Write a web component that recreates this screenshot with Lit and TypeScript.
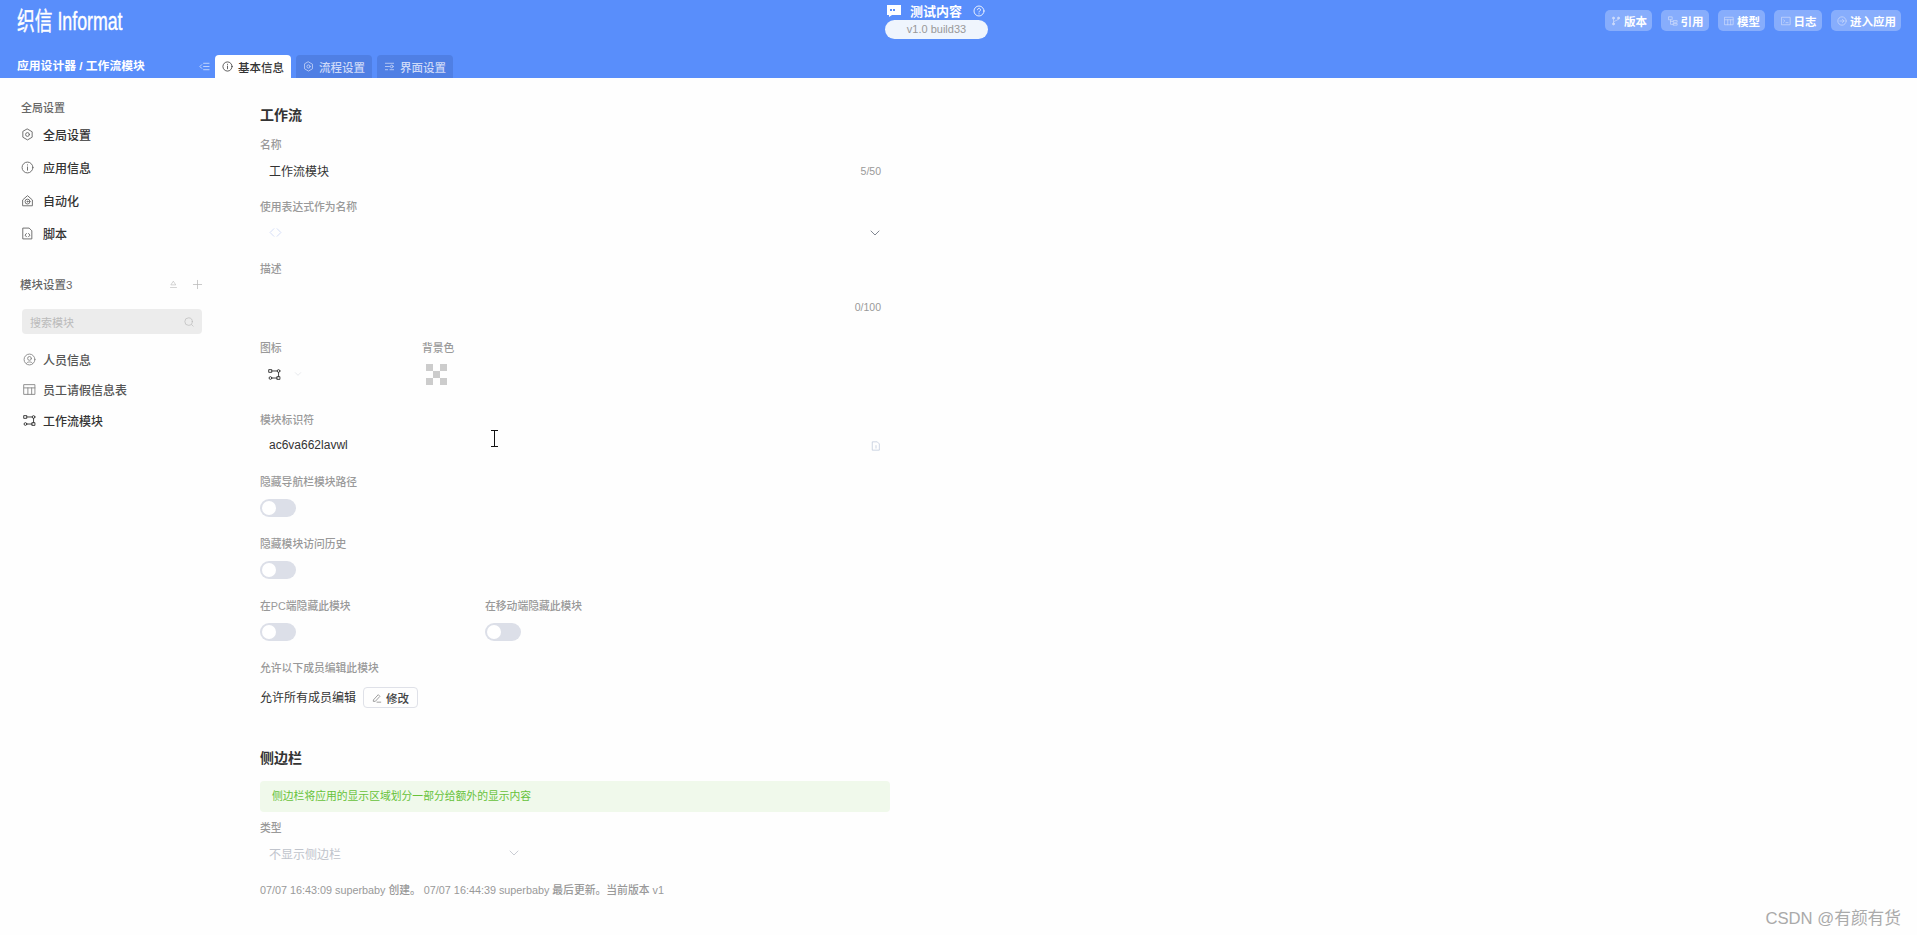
import { LitElement, html, css, svg } from "lit";
import { customElement } from "lit/decorators.js";

const ic = (body: unknown, size = 12, cls = "") =>
  html`<svg class=${cls} width=${size} height=${size} viewBox="0 0 24 24" fill="none" stroke="currentColor" stroke-width="1.700" stroke-linecap="round" stroke-linejoin="round">${body}</svg>`;

const gear = svg`<path d="M12 2l8.600 5v10L12 22l-8.600-5V7z"/><circle cx="12" cy="12" r="3.500"/>`;
const info = svg`<circle cx="12" cy="12" r="10"/><path d="M12 11v6M12 7v.5"/>`;
const auto = svg`<path d="M3 21V11l9-8 9 8v10z"/><circle cx="12" cy="14" r="4.500"/><circle cx="12" cy="14" r="1"/>`;
const script = svg`<path d="M4 2h11l5 5v15H4z"/><path d="M10 12l-2.500 3 2.500 3M14 12l2.500 3-2.500 3"/>`;
const person = svg`<circle cx="12" cy="12" r="10"/><circle cx="12" cy="10" r="3.500"/><path d="M6.500 19c1-3.500 10-3.500 11 0"/>`;
const table = svg`<path d="M2 3h20v18H2zM2 9h20M9 9v12M16 9v12"/>`;
const flow = svg`<rect x="2" y="3" width="5" height="5"/><circle cx="19.500" cy="5.500" r="2.500"/><circle cx="4.500" cy="18.500" r="2.500"/><rect x="17" y="16" width="5" height="5"/><path d="M7 5.500h10M7 18.500h10M19.500 8v8"/>`;
const branch = svg`<circle cx="6" cy="5" r="2.500" fill="currentColor"/><circle cx="18" cy="5" r="2.500" fill="currentColor"/><circle cx="6" cy="19" r="2.500" fill="currentColor"/><path d="M6 7v10M18 7c0 5-12 3-12 8"/>`;
const ref = svg`<rect x="2" y="2" width="8" height="7"/><rect x="13" y="11" width="9" height="4"/><rect x="13" y="18" width="9" height="4"/><path d="M6 9v11h7M6 13h7"/>`;
const term = svg`<rect x="2" y="3" width="20" height="18"/><path d="M6 9l3 3-3 3M12 16h5"/>`;
const enter = svg`<circle cx="12" cy="12" r="10"/><path d="M7 12h10M13 8l4 4-4 4"/>`;
const sliders = svg`<path d="M3 5h18M3 12h9M3 19h5M13 19h8"/><circle cx="17" cy="12" r="3"/>`;
const chevron = svg`<path d="M4 8l8 8 8-8"/>`;

@customElement("app-root")
export class AppRoot extends LitElement {
  static styles = css`
    :host { display: block; height: 935px; overflow: hidden; position: relative; background: #fefefe; color: #333;
      font-family: "Liberation Sans", "Noto Sans CJK SC", sans-serif; font-size: 12px; }
    svg { display: block; flex: none; }
    header { height: 78px; background: #598efb; color: #fff; display: flex; flex-direction: column; }
    .top { height: 55px; display: grid; grid-template-columns: 885px 103px 1fr; }
    .logo { margin: 7px 0 0 17px; font-size: 25px; line-height: 29px; font-weight: 400; transform: scaleX(.71); transform-origin: left; white-space: nowrap; -webkit-text-stroke: .4px #fff; }
    .center { display: flex; flex-direction: column; align-items: stretch; padding-top: 1px; }
    .title { display: flex; align-items: center; height: 19px; font-weight: 700; font-size: 13px; padding-left: 2px; white-space: nowrap; }
    .title .t { margin: 0 11px 0 9px; }
    .pill { width: 103px; height: 19px; border-radius: 10px; background: #eff5fd; color: #999; font-size: 11px; line-height: 19px; text-align: center; }
    .acts { display: flex; justify-content: flex-end; gap: 9px; padding: 10px 16px 0 0; }
    .act { height: 21px; padding: 0 5px 0 6.500px; display: flex; align-items: center; gap: 3px; border-radius: 5px; background: rgba(255,255,255,.28); font-weight: 700; font-size: 11.500px; }
    .act svg { color: #cfdcfb; }
    .sub { height: 23px; display: flex; align-items: flex-end; }
    .crumb { width: 199px; padding-left: 17px; box-sizing: border-box; font-weight: 700; font-size: 11.800px; line-height: 23px; align-self: flex-start; white-space: nowrap; }
    .col { width: 16px; height: 23px; display: flex; align-items: center; color: #dbe6fd; }
    .tabs { display: flex; gap: 5px; }
    .tab { width: 76px; height: 23px; box-sizing: border-box; display: flex; align-items: center; justify-content: center; gap: 5px; border-radius: 4px 4px 0 0; background: #4f7fe4; color: #cdd9f8; font-weight: 500; font-size: 11.500px; }
    .tab.on { background: #fff; color: #333; }
    main { display: flex; }
    aside { width: 260px; flex: none; box-sizing: border-box; padding-top: 21px; }
    .gt { height: 18px; line-height: 18px; padding-left: 21px; font-size: 11px; color: #666; font-weight: 500; margin-bottom: 1px; }
    .nav { height: 33px; display: flex; align-items: center; gap: 9px; padding-left: 21px; font-weight: 500; color: #333; }
    .nav svg { color: #666; }
    .mh { margin-top: 25px; height: 18px; display: flex; align-items: center; padding: 0 57px 0 20px; color: #666; font-weight: 500; font-size: 11.500px; }
    .mh .sp { flex: 1; }
    .mh svg { color: #bbb; }
    .mh svg + svg { margin-left: 14px; }
    .search { margin: 16px 0 10px 22px; width: 180px; height: 25px; box-sizing: border-box; padding: 0 8px; background: #ececec; border-radius: 4px; display: flex; align-items: center; justify-content: space-between; color: #bbb; font-size: 11px; }
    .mod { height: 30.500px; display: flex; align-items: center; gap: 7px; padding-left: 23px; color: #555; font-weight: 500; }
    .mod svg { color: #888; }
    .mod.on { color: #333; }
    .mod.on svg { color: #333; }
    .form { width: 630px; padding-top: 28px; }
    h2 { margin: 0; font-size: 14px; line-height: 18px; font-weight: 600; color: #333; }
    .lab { height: 16px; line-height: 16px; font-size: 10.800px; font-weight: 500; color: #999; white-space: nowrap; }
    .form > h2 + .f { margin-top: 13px; }
    .f { margin-bottom: 13px; }
    .ctl { margin-top: 3px; height: 30px; display: flex; align-items: center; justify-content: space-between; padding: 0 9px; color: #333; }
    .ctl > span:first-child { position: relative; top: -1px; }
    .cnt { font-size: 10.500px; color: #999; }
    .area { height: 47px; align-items: flex-end; justify-content: flex-end; padding-bottom: 13px; box-sizing: border-box; }
    .two { display: flex; }
    .tg { margin-top: 3px; height: 30px; display: flex; align-items: center; }
    .sw { width: 36px; height: 18px; border-radius: 9px; background: #dcdfe8; padding: 2px; box-sizing: border-box; }
    .sw i { display: block; width: 14px; height: 14px; border-radius: 50%; background: #fff; }
    .perm { display: flex; align-items: center; gap: 7px; margin-top: 5px; height: 31px; }
    .btn { width: 55px; height: 21px; box-sizing: border-box; border: 1px solid #dfe1e8; border-radius: 4px; display: flex; align-items: center; justify-content: center; gap: 4px; font-weight: 500; font-size: 11.500px; color: #444; margin-top: 2px; }
    .btn svg { color: #777; }
    .alert { height: 31px; margin-top: 14px; padding-left: 12px; line-height: 31px; border-radius: 4px; background: #f0f9eb; color: #67c23a; font-size: 10.800px; }
    .sel { margin-top: 2px; width: 260px; height: 30px; display: flex; align-items: center; justify-content: space-between; padding-left: 9px; color: #c0c4cc; box-sizing: border-box; }
    .foot { color: #999; font-size: 10.800px; line-height: 14px; margin-top: 15px; font-weight: 500; white-space: nowrap; }
    .chk { width: 21px; height: 21px; background: conic-gradient(#ccc 25%, #fefefe 0 50%, #ccc 0 75%, #fefefe 0) 7px 0 / 14px 14px; }
    .cursor { position: absolute; left: 490px; top: 430px; }
    .mark { position: absolute; right: 16px; top: 909px; font-size: 16.700px; line-height: 20px; color: #aaa; }
  `;

  private field(label: string, value: unknown, right: unknown = "") {
    return html`<div class="f"><div class="lab">${label}</div><div class="ctl"><span>${value}</span>${right}</div></div>`;
  }
  private toggle(label: string, style = "") {
    return html`<div class="f" style=${style}><div class="lab">${label}</div><div class="tg"><div class="sw"><i></i></div></div></div>`;
  }

  render() {
    const acts: [unknown, string][] = [[branch, "版本"], [ref, "引用"], [table, "模型"], [term, "日志"], [enter, "进入应用"]];
    return html`
      <header>
        <div class="top">
          <div class="logo">织信 Informat</div>
          <div class="center">
            <div class="title">
              <svg width="14" height="12" viewBox="0 0 14 12"><path d="M0 0h14v10H5l-3 2v-2H0z" fill="#fff"/><path d="M3 4h2v2H3zM6 4h2v2H6z" fill="#598efb"/></svg>
              <span class="t">测试内容</span>
              ${ic(svg`<circle cx="12" cy="12" r="10"/><path d="M9 9.500c0-4 6-4 6 0 0 2.500-3 2.500-3 4.500M12 17.500v.5"/>`, 12)}
            </div>
            <div class="pill">v1.0 build33</div>
          </div>
          <div class="acts">
            ${acts.map(([i, t]) => html`<div class="act">${ic(i, 10)}<span>${t}</span></div>`)}
          </div>
        </div>
        <div class="sub">
          <div class="crumb">应用设计器 / 工作流模块</div>
          <div class="col">${ic(svg`<path d="M10 5h12M10 12h12M10 19h12M6 8l-4 4 4 4"/>`, 11)}</div>
          <div class="tabs">
            <div class="tab on">${ic(info, 11)}基本信息</div>
            <div class="tab">${ic(gear, 11)}流程设置</div>
            <div class="tab">${ic(sliders, 11)}界面设置</div>
          </div>
        </div>
      </header>
      <main>
        <aside>
          <div class="gt">全局设置</div>
          <div class="nav">${ic(gear, 13)}全局设置</div>
          <div class="nav">${ic(info, 13)}应用信息</div>
          <div class="nav">${ic(auto, 13)}自动化</div>
          <div class="nav">${ic(script, 13)}脚本</div>
          <div class="mh">模块设置3<span class="sp"></span>
            ${ic(svg`<path d="M12 4l6 9H6zM4 20h16"/>`, 9)}
            ${ic(svg`<path d="M12 3v18M3 12h18"/>`, 11)}
          </div>
          <div class="search"><span>搜索模块</span>${ic(svg`<circle cx="11" cy="11" r="9"/><path d="M18 18l4 4"/>`, 10)}</div>
          <div class="mod">${ic(person, 13)}人员信息</div>
          <div class="mod">${ic(table, 13)}员工请假信息表</div>
          <div class="mod on">${ic(flow, 13)}工作流模块</div>
        </aside>
        <div class="form">
          <h2>工作流</h2>
          ${this.field("名称", "工作流模块", html`<span class="cnt">5/50</span>`)}
          ${this.field("使用表达式作为名称", html`<span style="color:#d0daf5">${ic(svg`<path d="M9 5l-7 7 7 7M15 5l7 7-7 7"/>`, 13)}</span>`, html`<span style="color:#6b7280">${ic(chevron, 12)}</span>`)}
          <div class="f"><div class="lab">描述</div><div class="ctl area"><span class="cnt">0/100</span></div></div>
          <div class="f two" style="margin-bottom:23px">
            <div style="width:162px"><div class="lab">图标</div>
              <div class="ctl" style="justify-content:flex-start;gap:13px;padding-left:8px;color:#333">${ic(flow, 13)}<span style="color:#d5d8df">${ic(chevron, 8)}</span></div>
            </div>
            <div><div class="lab">背景色</div><div class="ctl" style="padding:0 0 0 4px"><div class="chk"></div></div></div>
          </div>
          ${this.field("模块标识符", "ac6va662lavwl", html`<span style="color:#b8c4d8">${ic(svg`<path d="M4 2h11l5 5v15H4z"/><path d="M12 11v6"/>`, 10)}</span>`)}
          ${this.toggle("隐藏导航栏模块路径")}
          ${this.toggle("隐藏模块访问历史")}
          <div class="two">
            ${this.toggle("在PC端隐藏此模块", "width:225px")}
            ${this.toggle("在移动端隐藏此模块")}
          </div>
          <div>
            <div class="lab">允许以下成员编辑此模块</div>
            <div class="perm"><span>允许所有成员编辑</span>
              <div class="btn">${ic(svg`<path d="M4 16L15 4l4 4L8 20H4zM12 22h9"/>`, 10)}修改</div>
            </div>
          </div>
          <h2 style="margin-top:37px">侧边栏</h2>
          <div class="alert">侧边栏将应用的显示区域划分一部分给额外的显示内容</div>
          <div class="lab" style="margin-top:8px">类型</div>
          <div class="sel"><span>不显示侧边栏</span><span style="color:#c0c4cc">${ic(chevron, 12)}</span></div>
          <div class="foot">07/07 16:43:09 superbaby 创建。 07/07 16:44:39 superbaby 最后更新。当前版本 v1</div>
        </div>
      </main>
      <svg class="cursor" width="9" height="17" viewBox="0 0 9 17" fill="none" stroke="#111"><path d="M1 .5h7M4.500.5v16M1 16.500h7"/></svg>
      <div class="mark">CSDN @有颜有货</div>
    `;
  }
}
